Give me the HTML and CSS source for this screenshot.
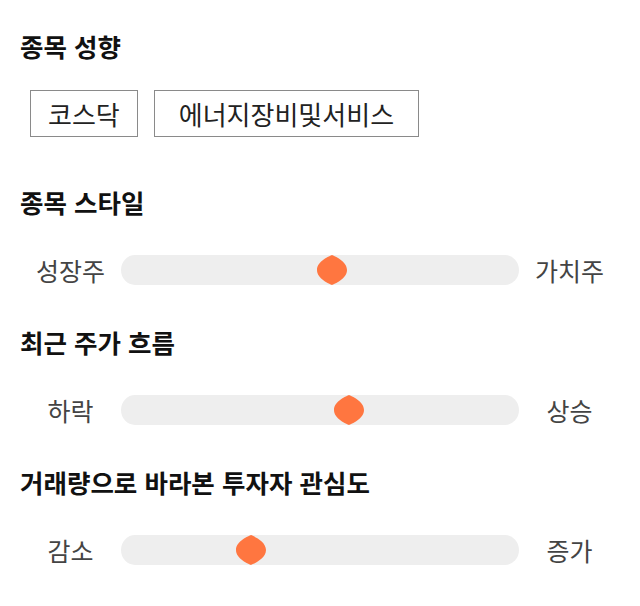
FILE: index.html
```html
<!DOCTYPE html>
<html lang="ko">
<head>
<meta charset="utf-8">
<link rel="stylesheet" href="styles.css">
</head>
<body>
<main class="panel">
  <section class="group">
    <h2 class="title">종목 성향</h2>
    <div class="tags">
      <span class="tag">코스닥</span>
      <span class="tag tag-wide">에너지장비및서비스</span>
    </div>
  </section>
  <section class="group">
    <h2 class="title">종목 스타일</h2>
    <div class="scale">
      <span class="label">성장주</span>
      <div class="track"><svg class="thumb" style="left: 52.9%" viewBox="0 0 30 30" width="30" height="30"><path d="M15 0C17 1 30 6 30 15C30 24 17 29 15 30C13 29 0 24 0 15C0 6 13 1 15 0Z"/></svg></div>
      <span class="label">가치주</span>
    </div>
  </section>
  <section class="group">
    <h2 class="title">최근 주가 흐름</h2>
    <div class="scale">
      <span class="label">하락</span>
      <div class="track"><svg class="thumb" style="left: 57.4%" viewBox="0 0 30 30" width="30" height="30"><path d="M15 0C17 1 30 6 30 15C30 24 17 29 15 30C13 29 0 24 0 15C0 6 13 1 15 0Z"/></svg></div>
      <span class="label">상승</span>
    </div>
  </section>
  <section class="group">
    <h2 class="title">거래량으로 바라본 투자자 관심도</h2>
    <div class="scale">
      <span class="label">감소</span>
      <div class="track"><svg class="thumb" style="left: 32.7%" viewBox="0 0 30 30" width="30" height="30"><path d="M15 0C17 1 30 6 30 15C30 24 17 29 15 30C13 29 0 24 0 15C0 6 13 1 15 0Z"/></svg></div>
      <span class="label">증가</span>
    </div>
  </section>
</main>
</body>
</html>
```

FILE: styles.css
```css
html, body {
  margin: 0;
  padding: 0;
  background: #ffffff;
}

body {
  font-family: "Noto Sans CJK KR", "Noto Sans", sans-serif;
  color: #111111;
}

.panel {
  display: flex;
  flex-direction: column;
  gap: 42px;
  padding: 31px 20px 0 20px;
}

.group {
  display: flex;
  flex-direction: column;
  gap: 38px;
}

.title {
  margin: 0;
  font-size: 25.5px;
  line-height: 30px;
  font-weight: 700;
  color: #111111;
}

.tags {
  display: flex;
  gap: 16px;
  padding-left: 10px;
  margin-top: -9px;
  margin-bottom: 8px;
}

.tag {
  display: inline-flex;
  align-items: center;
  justify-content: center;
  height: 45px;
  padding: 0 17px;
  border: 1px solid #8a8a8a;
  font-size: 26px;
  color: #222222;
}

.tag-wide {
  padding: 0 24px;
}

.scale {
  display: flex;
  align-items: center;
  height: 30px;
}

.label {
  width: 101px;
  flex: none;
  text-align: center;
  font-size: 25px;
  color: #444444;
}

.track {
  position: relative;
  flex: 1;
  height: 30px;
  border-radius: 14px / 15px;
  background: #eeeeee;
}

.thumb {
  position: absolute;
  top: 0;
  margin-left: -15px;
  fill: #ff7640;
}
```
